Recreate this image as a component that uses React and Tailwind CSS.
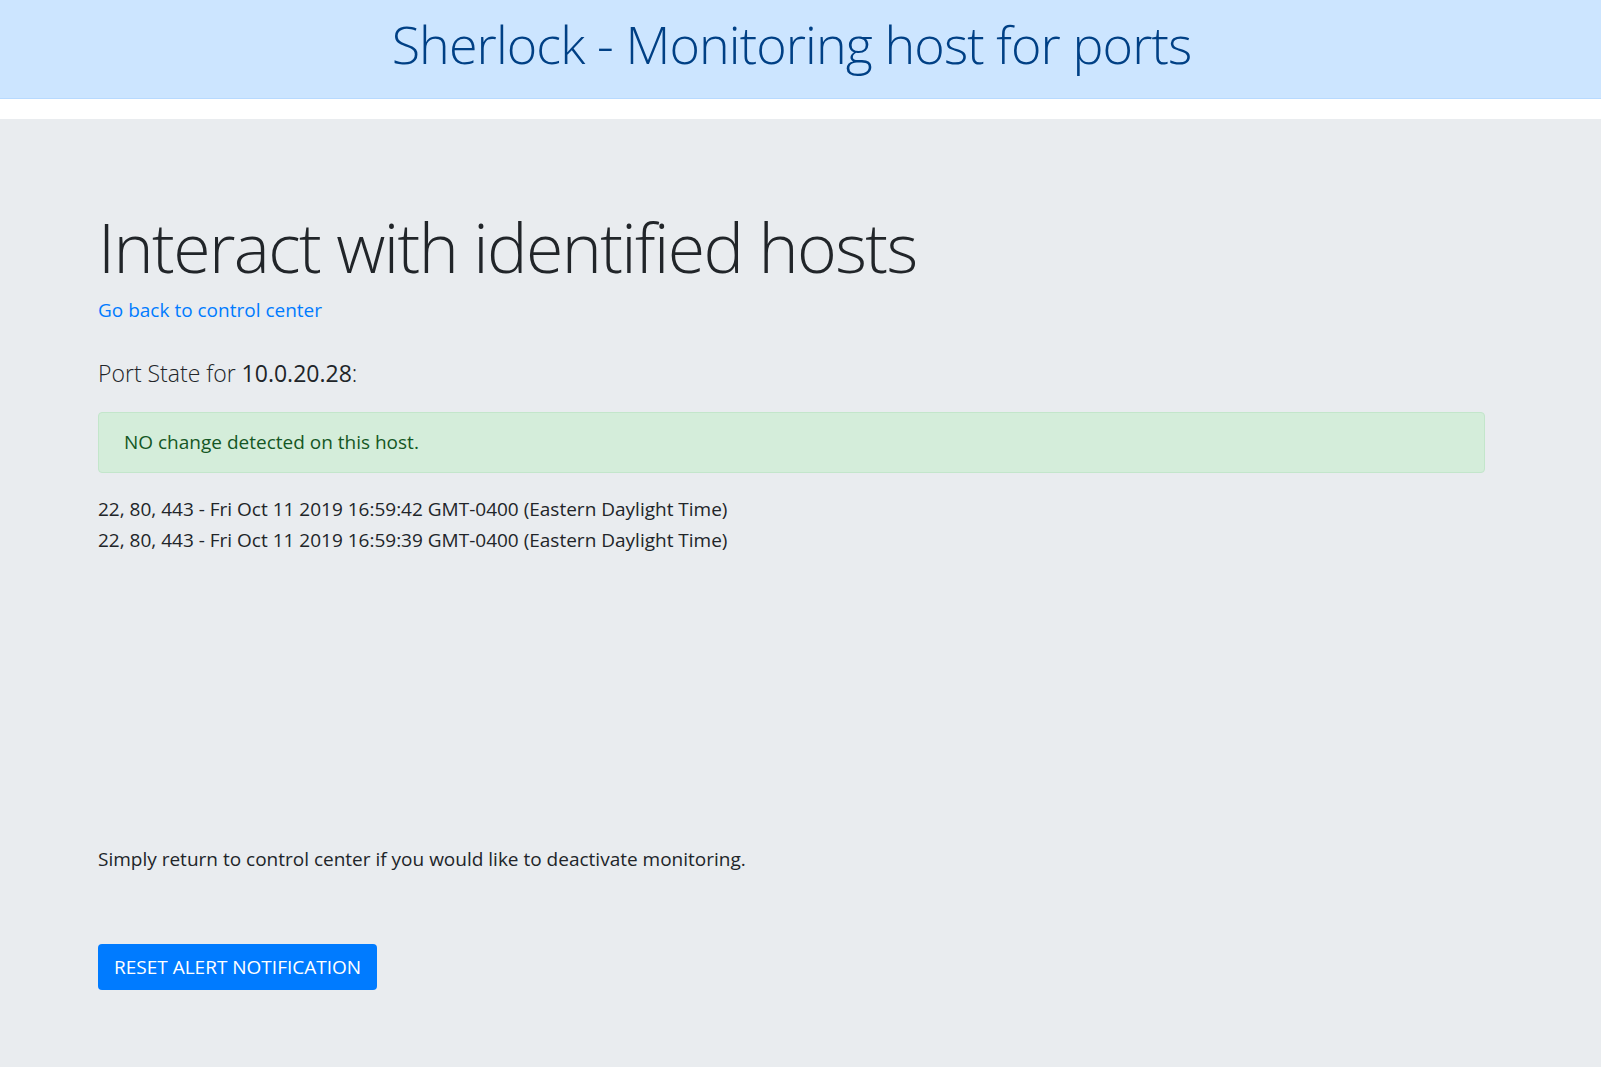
export default function App() {
  const scans = [
    '22, 80, 443 - Fri Oct 11 2019 16:59:42 GMT-0400 (Eastern Daylight Time)',
    '22, 80, 443 - Fri Oct 11 2019 16:59:39 GMT-0400 (Eastern Daylight Time)',
  ]

  return (
    <div className="min-h-screen flex flex-col bg-white text-[#212529] font-['Segoe_UI','Open_Sans',sans-serif]">
      {/* top banner */}
      <header className="h-[99px] shrink-0 bg-[#cce5ff] border-b border-[#b8daff] flex items-center justify-center pb-[10px] pr-[18px]">
        <h2 className="text-[52px] font-light leading-[1.2] tracking-[-0.9px] text-[#004085]">Sherlock - Monitoring host for ports</h2>
      </header>

      <main className="mt-[20px] flex-1 bg-[#e9ecef] pl-[98px] pr-[116px] pt-[85px] pb-[60px]">
        <h1 className="text-[68px] font-light leading-[86px] tracking-[-1.6px]">Interact with identified hosts</h1>
        <a href="#" className="block mt-[5px] text-[19px] leading-[30px] text-[#007bff]">Go back to control center</a>

        <p className="mt-[34px] text-[23px] font-light leading-[29px]">
          Port State for <span className="font-normal">10.0.20.28</span>:
        </p>

        <div className="mt-[24px] h-[61px] flex items-center px-[25px] bg-[#d4edda] border border-[#c3e6cb] rounded-[4px] text-[19px] text-[#155724]">
          NO change detected on this host.
        </div>

        <div className="mt-[21px] text-[19px] leading-[31px]">
          {scans.map((s, i) => (
            <p key={i}>{s}</p>
          ))}
        </div>

        <p className="mt-[288px] text-[19px] leading-[30px]">Simply return to control center if you would like to deactivate monitoring.</p>

        <button className="mt-[70px] h-[46px] px-[16px] bg-[#007bff] text-white text-[19px] rounded-[4px]">
          RESET ALERT NOTIFICATION
        </button>
      </main>
    </div>
  )
}
